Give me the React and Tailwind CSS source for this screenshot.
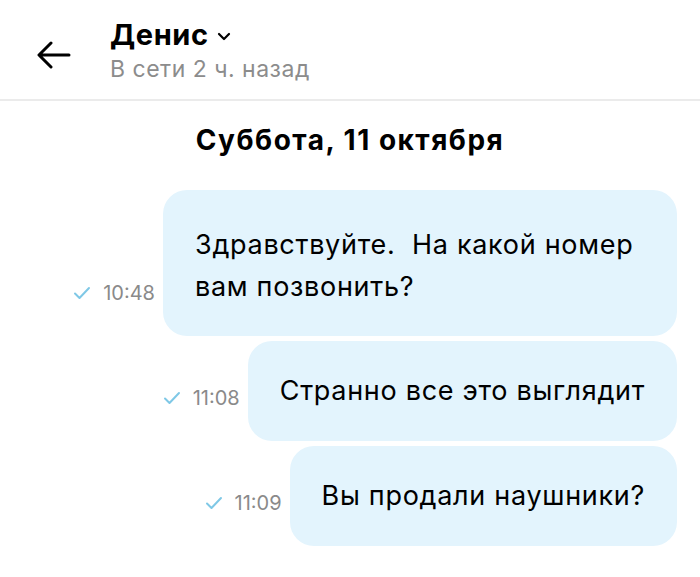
import React from "react";

const messages = [
  { text: "Здравствуйте.\u00a0 На какой номер вам позвонить?", time: "10:48", wide: true },
  { text: "Странно все это выглядит", time: "11:08" },
  { text: "Вы продали наушники?", time: "11:09" },
];

const Check = () => (
  <svg width="18" height="14" viewBox="0 0 18 14" fill="none">
    <path d="M2 7.5L6.5 12L16 2" stroke="#7fc8e6" strokeWidth="2" strokeLinecap="round" strokeLinejoin="round" />
  </svg>
);

const App = () => {
  return (
    <div className="w-[700px] h-[577px] overflow-hidden bg-white text-black" style={{ fontFamily: "Inter, 'Liberation Sans', sans-serif" }}>
      {/* HEADER */}
      <header className="h-[101px] flex items-center border-b-2 border-[#ebebeb]">
        <div className="w-[110px] pl-[37px] pt-[10px]">
          <svg width="34" height="28" viewBox="0 0 34 28" fill="none">
            <path d="M32 14H3M14 2L2 14L14 26" stroke="#000" strokeWidth="3" strokeLinecap="round" strokeLinejoin="round" />
          </svg>
        </div>
        <div className="pt-[2px]">
          <div className="flex items-center gap-[8px]">
            <span className="text-[29px] leading-[34px] font-bold tracking-[0.6px]">Денис</span>
            <svg width="14" height="9" viewBox="0 0 14 9" fill="none" className="mt-[3px]">
              <path d="M2 2L7 7L12 2" stroke="#000" strokeWidth="2.2" strokeLinecap="round" strokeLinejoin="round" />
            </svg>
          </div>
          <div className="mt-[3px] text-[23px] leading-[28px] text-[#8c8c8c] tracking-[0.5px]">В сети 2 ч. назад</div>
        </div>
      </header>

      {/* DATE */}
      <div className="pt-[19px] pb-[30px] text-center text-[28px] leading-[40px] font-bold tracking-[1.5px]">Суббота, 11 октября</div>

      {/* MESSAGES */}
      <div className="flex flex-col items-end gap-[5px] pr-[23px]">
        {messages.map((m, i) => (
          <div key={i} className="flex items-end">
            <div className="flex items-center gap-[12px] mr-[8px] mb-[21px]">
              <Check />
              <span className="text-[20px] leading-[44px] text-[#8a8a8a]">{m.time}</span>
            </div>
            <div className={`bg-[#e3f4fd] rounded-[24px] px-[32px] py-[29px] text-[27px] leading-[42px] tracking-[0.7px] ${m.wide ? "w-[514px] pt-[34px] pb-[28px]" : ""}`}>
              {m.text}
            </div>
          </div>
        ))}
      </div>
    </div>
  );
};

export default App;
